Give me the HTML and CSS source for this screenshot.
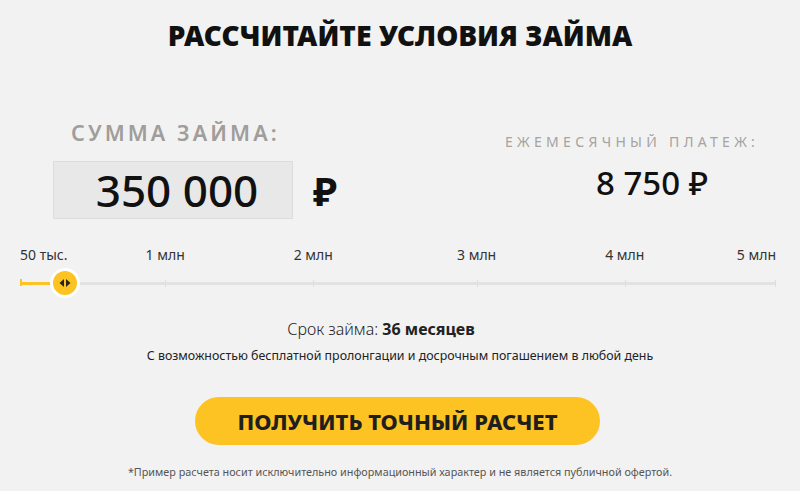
FILE: index.html
```html
<!DOCTYPE html>
<html lang="ru">
<head>
<meta charset="utf-8">
<link rel="stylesheet" href="styles.css">
</head>
<body>
<main class="calc">
  <h1 class="title">РАССЧИТАЙТЕ УСЛОВИЯ ЗАЙМА</h1>
  <section class="top">
    <div class="sum">
      <div class="label label-big">СУММА ЗАЙМА:</div>
      <div class="sum-row">
        <div class="sum-box">350 000</div>
        <div class="rub-big">₽</div>
      </div>
    </div>
    <div class="pay">
      <div class="label label-small">ЕЖЕМЕСЯЧНЫЙ ПЛАТЕЖ:</div>
      <div class="pay-value">8 750 ₽</div>
    </div>
  </section>
  <section class="slider">
    <div class="scale">
      <span class="mark mark-first">50 тыс.</span>
      <span class="mark" style="left:19.2%">1 млн</span>
      <span class="mark" style="left:38.8%">2 млн</span>
      <span class="mark" style="left:60.4%">3 млн</span>
      <span class="mark" style="left:80%">4 млн</span>
      <span class="mark mark-last">5 млн</span>
    </div>
    <div class="track">
      <span class="tick" style="left:19.2%"></span>
      <span class="tick" style="left:38.8%"></span>
      <span class="tick" style="left:60.4%"></span>
      <span class="tick" style="left:80%"></span>
      <span class="tick tick-end"></span>
      <span class="fill" style="width:5.95%"></span>
      <span class="thumb" style="left:5.95%">
        <svg width="12" height="10" viewBox="0 0 12 10"><path d="M5 1 L0.5 5 L5 9 Z M7 1 L11.5 5 L7 9 Z" fill="#2b2418"/></svg>
      </span>
    </div>
  </section>
  <p class="term">Срок займа: <b>36 месяцев</b></p>
  <p class="note">С возможностью бесплатной пролонгации и досрочным погашением в любой день</p>
  <div class="cta-wrap"><button class="cta">ПОЛУЧИТЬ ТОЧНЫЙ РАСЧЕТ</button></div>
  <p class="disclaimer">*Пример расчета носит исключительно информационный характер и не является публичной офертой.</p>
</main>
</body>
</html>
```
FILE: styles.css
```css
* { box-sizing: border-box; }
html, body { margin: 0; padding: 0; }
body {
  background: #f2f2f2;
  font-family: "Noto Sans", "DejaVu Sans", sans-serif;
  color: #1a1a1a;
  width: 800px;
  height: 491px;
  overflow: hidden;
}
.calc { display: flex; flex-direction: column; }
.title {
  margin: 16px 0 0;
  text-align: center;
  font-size: 28px;
  line-height: 38px;
  font-weight: 900;
  color: #111;
  letter-spacing: 0;
}
.top {
  display: flex;
  justify-content: space-between;
  margin-top: 66px;
  height: 107px;
}
.sum { padding-left: 53px; }
.label { color: #a09d9a; font-weight: 600; }
.label-big {
  font-size: 21.5px;
  line-height: 26px;
  letter-spacing: 3.1px;
  padding-left: 18px;
}
.sum-row { display: flex; align-items: center; margin-top: 15px; }
.sum-box {
  width: 240px;
  height: 58px;
  background: #e8e8e8;
  border: 1px solid #dcdcdc;
  font-size: 44px;
  font-weight: 500;
  line-height: 56px;
  text-align: center;
  padding-left: 8px;
  color: #111;
}
.rub-big { font-size: 40px; font-weight: 700; margin-left: 20px; color: #111; }
.pay { width: 300px; padding-left: 4px; text-align: center; padding-top: 14px; }
.label-small {
  font-size: 14px;
  line-height: 16px;
  letter-spacing: 4.3px;
  font-weight: 400;
  color: #a6a3a0;
  margin-left: -40px;
}
.pay-value {
  margin-top: 15px;
  font-size: 33px;
  line-height: 36px;
  font-weight: 500;
  color: #111;
}
.slider { padding: 0 24px 0 20px; margin-top: 18px; }
.scale { position: relative; height: 24px; font-size: 14px; color: #333; }
.mark { position: absolute; top: 0; transform: translateX(-50%); white-space: nowrap; }
.mark-first { left: 0; transform: none; }
.mark-last { right: 0; left: auto; transform: none; }
.track {
  position: relative;
  height: 3px;
  background: #e2e2e2;
  margin-top: 13px;
}
.tick { position: absolute; top: -2px; width: 1px; height: 7px; background: #dedede; }
.tick-end { right: 0; }
.fill { position: absolute; left: 0; top: 0; height: 3px; background: #fcc322; }
.fill::before { content: ""; position: absolute; left: 0; top: -3px; width: 2px; height: 7px; background: #fcc322; }
.thumb {
  position: absolute;
  top: 1px;
  width: 30px;
  height: 30px;
  margin-left: -15px;
  margin-top: -15px;
  border-radius: 50%;
  background: #fcc322;
  border: 3px solid #fff;
  display: flex;
  align-items: center;
  justify-content: center;
}
.term { margin: 34px 0 0; padding-right: 38px; text-align: center; font-size: 16px; line-height: 20px; color: #222; font-weight: 300; }
.term b { font-weight: 700; }
.note { margin: 8px 0 0; text-align: center; font-size: 12.4px; line-height: 17px; color: #222; }
.cta-wrap { display: flex; justify-content: center; margin-top: 33px; padding-right: 5px; }
.cta {
  width: 405px;
  height: 48px;
  border: none;
  border-radius: 24px;
  background: #fcc322;
  font-family: inherit;
  font-size: 22px;
  font-weight: 800;
  color: #1f1f1f;
  padding: 0;
}
.disclaimer { margin: 20px 0 0; text-align: center; font-size: 10.8px; line-height: 14px; color: #555; }
```
